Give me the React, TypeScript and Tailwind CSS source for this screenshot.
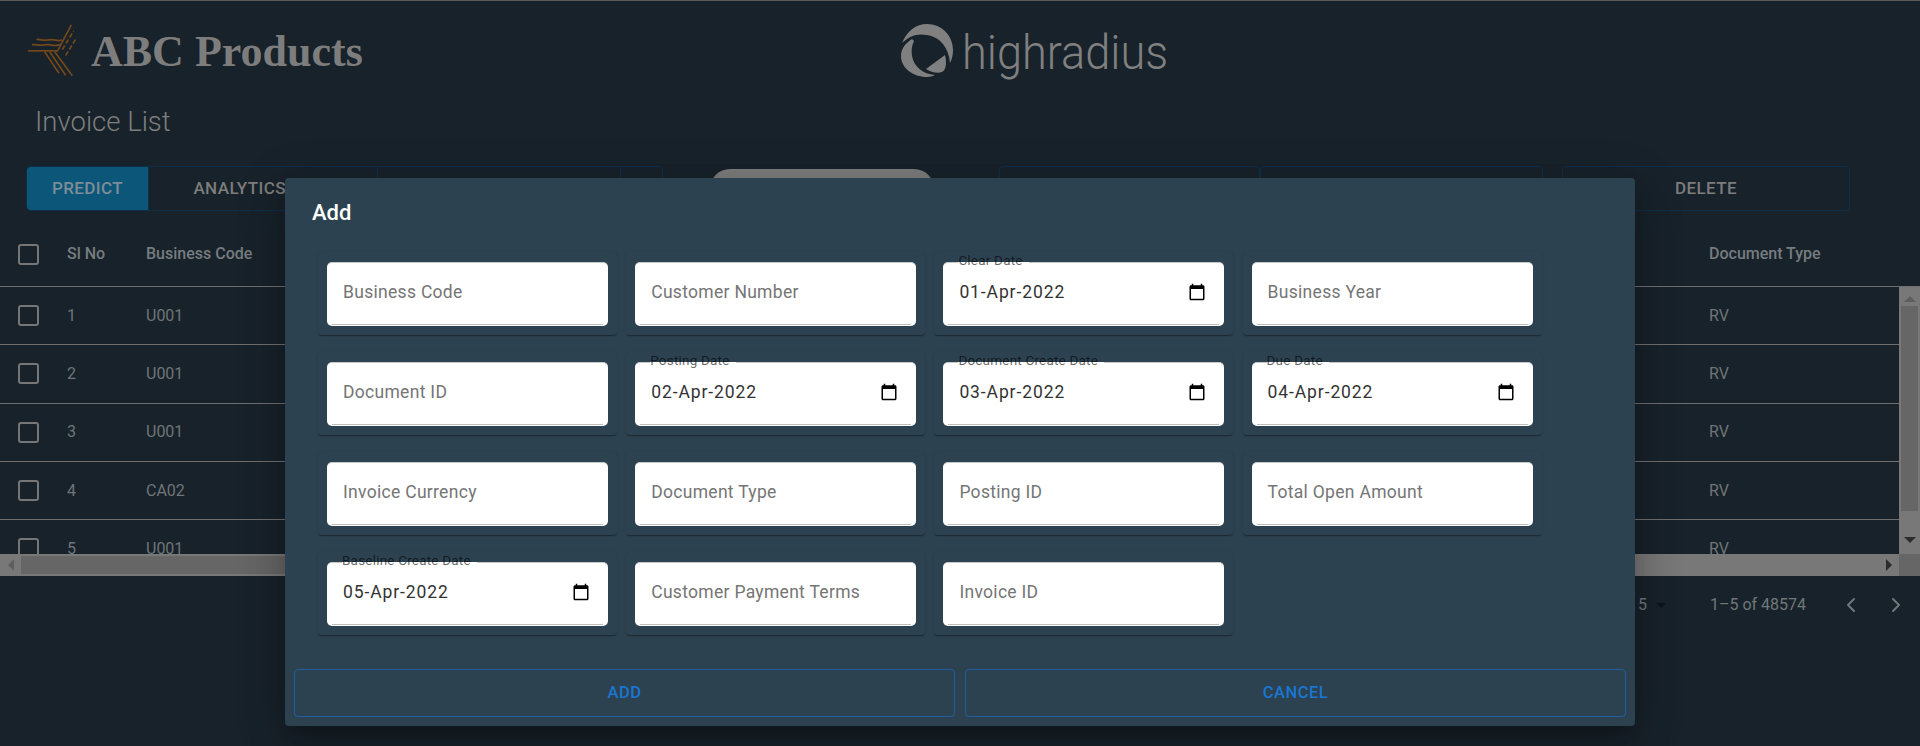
import React from 'react';
import { ChevronLeft, ChevronRight } from 'lucide-react';

const roboto = "font-['Roboto',sans-serif]";

const rows = [
    { id: 1, code: 'U001' },
    { id: 2, code: 'U001' },
    { id: 3, code: 'U001' },
    { id: 4, code: 'CA02' },
    { id: 5, code: 'U001' },
];

type Field = { label: string; value?: string };

const fields: Field[] = [
    { label: 'Business Code' },
    { label: 'Customer Number' },
    { label: 'Clear Date', value: '01-Apr-2022' },
    { label: 'Business Year' },
    { label: 'Document ID' },
    { label: 'Posting Date', value: '02-Apr-2022' },
    { label: 'Document Create Date', value: '03-Apr-2022' },
    { label: 'Due Date', value: '04-Apr-2022' },
    { label: 'Invoice Currency' },
    { label: 'Document Type' },
    { label: 'Posting ID' },
    { label: 'Total Open Amount' },
    { label: 'Baseline Create Date', value: '05-Apr-2022' },
    { label: 'Customer Payment Terms' },
    { label: 'Invoice ID' },
];

const AbcLogo = () => (
    <svg width="50" height="53" viewBox="85 72 150 158" fill="none" stroke="#74481a" strokeWidth="5" className="shrink-0">
        <path d="M85 152H176" />
        <path d="M97 134c12-3 20 3 30 1s18-3 30 0 18 0 26-2" />
        <path d="M110 118c12-2 18 4 30 2s18-3 28 0 12 1 19-1" />
        <path d="M175 150L215 74" />
        <path d="M188 148L222 92" strokeDasharray="14 7" />
        <path d="M198 166L231 112" strokeDasharray="14 7" />
        <path d="M135 155L178 219" />
        <path d="M150 155L198 225" />
        <path d="M165 155L218 227" />
    </svg>
);

const RadiusLogo = () => (
    <svg width="53" height="53" viewBox="0 0 53 53" fill="#808080" className="shrink-0">
        <path d="M1 19C6 7 15 0 26 0c15 0 26 12 26 26 0 5-1 9-3 13-1-14-9-26-23-28C16 9 8 12 1 19Z" />
        <path d="M11 15C3 20 0 26 0 32c0 12 12 21 26 21 3 0 6-1 8-2-12-1-21-8-23-19-1-6 0-11 2-15Z" />
        <path d="M44 31 25 45c5 3 11 5 16 3 4-2 5-9 3-17Z" />
    </svg>
);

const CalendarIcon = () => (
    <svg width="18" height="18" viewBox="0 0 24 24" fill="#000" className="shrink-0">
        <path d="M20 3h-1V1h-2v2H7V1H5v2H4c-1.1 0-2 .9-2 2v16c0 1.1.9 2 2 2h16c1.1 0 2-.9 2-2V5c0-1.1-.9-2-2-2zm0 18H4V8h16v13z" />
    </svg>
);

const Checkbox = () => <span className="block size-[21px] rounded-[3px] border-2 border-[#767676]" />;

const FormField: React.FC<{ field: Field }> = ({ field }) => (
    <div className="rounded-[4px] bg-[#2d4250] px-[9px] pt-[10px] pb-[9px] shadow-[0_2px_1px_-1px_rgba(0,0,0,0.2),0_1px_1px_0_rgba(0,0,0,0.14),0_1px_3px_0_rgba(0,0,0,0.12)]">
        <div className="relative flex h-16 items-start justify-between rounded-[5px] border-t border-t-[#c9c9c9] bg-white px-4 pt-[17px]">
            {field.value ? (
                <>
                    <span className="absolute -top-[11px] left-[15px] bg-[linear-gradient(transparent_10px,#fff_10px,#fff_11px,transparent_11px)] pr-[6px] text-[13.5px] leading-[16px] tracking-[0.2px] text-black/60">
                        {field.label}
                    </span>
                    <span className="text-[17.5px] leading-6 tracking-[0.9px] text-[#333]">{field.value}</span>
                    <span className="mt-[3px] mr-[2px]">
                        <CalendarIcon />
                    </span>
                </>
            ) : (
                <span className="text-[17.5px] leading-6 tracking-[0.3px] text-[#757575]">{field.label}</span>
            )}
            <span className="absolute inset-x-[5px] bottom-px h-px bg-[#bdbdbd]" />
        </div>
    </div>
);

const App: React.FC = () => (
    <div className={`${roboto} relative h-[746px] w-[1920px] overflow-hidden border-t border-[#5a5a5a] bg-[#18222a]`}>
        <header className="relative flex h-[89px] items-center pt-[10px]">
            <div className="ml-[28px] flex items-center gap-[13px]">
                <AbcLogo />
                <span className="mt-[2px] font-['Liberation_Serif',serif] text-[44px] font-bold leading-none text-[#7d7d7d]">ABC Products</span>
            </div>
            <div className="absolute top-[23px] left-[901px] flex items-start gap-[8px]">
                <RadiusLogo />
                <span className="origin-left scale-x-[0.95] text-[47.5px] font-light leading-[58px] text-[#808080]">highradius</span>
            </div>
        </header>

        <h1 className="mt-[15px] ml-[35px] text-[27.5px] font-light leading-[34px] text-[#7e7e7e]">Invoice List</h1>

        <div className="mt-[27px] ml-[26px] flex h-[45px] items-start text-[17px] font-medium tracking-[0.4px] text-[#7d7d7d]">
            <div className="flex h-full w-[637px] rounded-[4px] border border-[#0f2e48]">
                <button className="w-[121px] rounded-l-[4px] bg-[#0b5679] text-[#7c8d96]">PREDICT</button>
                <button className="w-[229px] border-l border-[#0f2e48]">ANALYTICS VIEW</button>
                <button className="w-[243px] border-l border-[#0f2e48]">ADVANCE SEARCH</button>
                <button className="flex-1 border-l border-[#0f2e48]" />
            </div>
            <div className="mt-[3px] ml-[47px] h-[40px] w-[224px] rounded-[20px] bg-[#7b7b7b]" />
            <button className="ml-[65px] h-full w-[261px] rounded-[4px] border border-[#0f2e48]">REFRESH</button>
            <button className="h-full w-[283px] rounded-[4px] border border-[#0f2e48]">EDIT</button>
            <button className="ml-[19px] h-full w-[288px] rounded-[4px] border border-[#0f2e48]">DELETE</button>
        </div>

        <section className="mt-[11px] text-[#6f7578]">
            <div className="grid h-[65px] grid-cols-[67px_79px_1563px_1fr] items-center border-b border-[#6f6f6f] text-[16px] font-medium text-[#767c7f]">
                <span className="pl-[18px]">
                    <Checkbox />
                </span>
                <span>Sl No</span>
                <span>Business Code</span>
                <span>Document Type</span>
            </div>

            <div className="relative h-[267px] overflow-hidden">
                {rows.map((row) => (
                    <div key={row.id} className="grid h-[58.3px] grid-cols-[67px_79px_1563px_1fr] items-center border-b border-[#6f6f6f] text-[16px]">
                        <span className="pl-[18px]">
                            <Checkbox />
                        </span>
                        <span>{row.id}</span>
                        <span>{row.code}</span>
                        <span>RV</span>
                    </div>
                ))}
                <div className="absolute top-0 right-0 bottom-0 flex w-[21px] flex-col items-center bg-[#787878]">
                    <span className="mt-[9px] border-x-[6px] border-b-[6px] border-x-transparent border-b-[#5e5e5e]" />
                    <span className="mt-[4px] h-[205px] w-[17px] bg-[#666]" />
                    <span className="mt-[26px] border-x-[6px] border-t-[6px] border-x-transparent border-t-[#2c2c2c]" />
                </div>
            </div>

            <div className="flex h-[22px] bg-[#787878]">
                <span className="flex w-[21px] items-center justify-center">
                    <span className="border-y-[6px] border-r-[6px] border-y-transparent border-r-[#5e5e5e]" />
                </span>
                <span className="my-[2px] w-[300px] bg-[#666]" />
                <span className="ml-auto flex w-[21px] items-center justify-center">
                    <span className="border-y-[6px] border-l-[6px] border-y-transparent border-l-[#2c2c2c]" />
                </span>
                <span className="w-[21px] bg-[#666]" />
            </div>

            <div className="mt-[16px] flex h-[26px] items-center text-[16px] text-[#70777a]">
                <span className="ml-[1638px]">5</span>
                <span className="ml-[9px] border-x-[5px] border-t-[5px] border-x-transparent border-t-[#0f1418]" />
                <span className="ml-[44px]">1–5 of 48574</span>
                <ChevronLeft size={24} strokeWidth={2} className="ml-[33px] text-[#70777a]" />
                <ChevronRight size={24} strokeWidth={2} className="ml-[21px] text-[#70777a]" />
            </div>
        </section>

        <div className="absolute top-[177px] left-[285px] flex h-[548px] w-[1350px] flex-col rounded-[4px] bg-[#2d4250] shadow-[0_11px_15px_-7px_rgba(0,0,0,0.2),0_24px_38px_3px_rgba(0,0,0,0.14),0_9px_46px_8px_rgba(0,0,0,0.12)]">
            <h2 className="mt-[21px] ml-[27px] text-[22px] font-medium leading-[28px] text-white">Add</h2>
            <div className="mt-[25px] ml-[33px] grid w-[1226px] grid-cols-[repeat(4,299px)] gap-x-[9.2px] gap-y-[17px]">
                {fields.map((field) => (
                    <FormField key={field.label} field={field} />
                ))}
            </div>
            <div className="mt-auto mb-[9px] flex gap-[10px] px-[9px]">
                <button className="h-[48px] flex-1 rounded-[4px] border border-[#1f5fa0] text-[16.5px] font-medium tracking-[0.5px] text-[#1976d2]">ADD</button>
                <button className="h-[48px] flex-1 rounded-[4px] border border-[#1f5fa0] text-[16.5px] font-medium tracking-[0.5px] text-[#1976d2]">CANCEL</button>
            </div>
        </div>
    </div>
);

export default App;
